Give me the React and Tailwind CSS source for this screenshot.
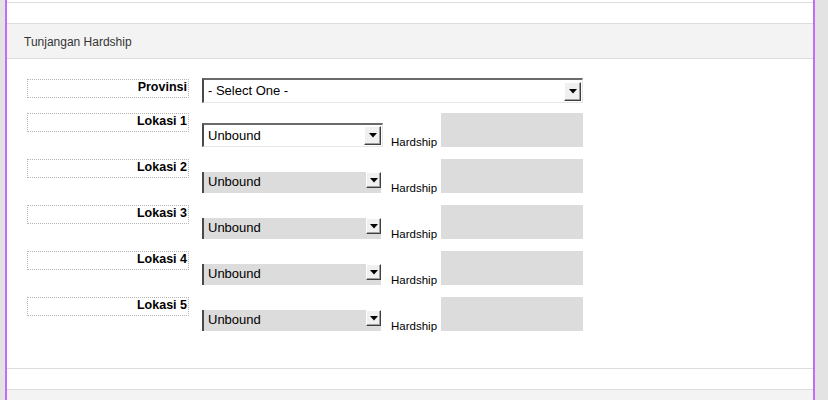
import React from "react";

const font = { fontFamily: '"Liberation Sans", Arial, sans-serif' };

function Arrow({ small }) {
  return (
    <div
      className={`flex items-center justify-center bg-[#f0f0f0] border-t border-l border-t-white border-l-white border-r border-b border-r-[#404040] border-b-[#404040] shadow-[inset_-1px_-1px_0_#a0a0a0] ${
        small ? "w-[15px] h-[16px]" : "w-[17px] h-[19px]"
      }`}
    >
      <svg width="8" height="5" viewBox="0 0 8 5">
        <polygon points="0,0 8,0 4,4.5" fill="#000" />
      </svg>
    </div>
  );
}

function Select({ text, disabled }) {
  if (disabled) {
    return (
      <div className="flex items-start h-[21px] w-[179px] bg-[#dcdcdc] border-l-2 border-[#4a4a4a]">
        <span className="flex-1 pl-[4px] text-[13px] leading-[20px] text-black">{text}</span>
        <Arrow small />
      </div>
    );
  }
  return (
    <div className="flex items-center h-[24px] w-[181px] bg-white border-t-2 border-l-2 border-t-[#6a6a6a] border-l-[#4a4a4a] border-b border-r border-b-[#e6e6e6] border-r-[#e6e6e6] pr-[1px]">
      <span className="flex-1 pl-[4px] text-[13px] text-black">{text}</span>
      <Arrow />
    </div>
  );
}

function Label({ text }) {
  return (
    <div className="w-[162px] h-[19px] border border-dotted border-[#b5b5b5] text-right text-[12.5px] font-bold leading-[15px] text-black pr-[1px]">
      {text}
    </div>
  );
}

function LokasiRow({ n, disabled }) {
  return (
    <div className="flex items-end h-[34px] mb-[12px]">
      <div className="self-start">
        <Label text={`Lokasi ${n}`} />
      </div>
      <div className="ml-[13px] w-[181px]">
        <Select text="Unbound" disabled={disabled} />
      </div>
      <span className="ml-[8px] mr-[4px] -mb-[2px] text-[11.5px] leading-[14px] text-black">Hardship</span>
      <div className="w-[142px] h-[34px] bg-[#dcdcdc]" />
    </div>
  );
}

export default function App() {
  return (
    <div className="flex h-[400px] w-[828px] overflow-hidden bg-[#e3e3e3]" style={font}>
      <div className="w-[5px]" />
      <div className="w-[2px] bg-[#c06cff]" />
      <div className="w-[806px] flex flex-col bg-white">
        <div className="h-[3px] border-b border-[#dddddd]" />
        <div className="h-[20px]" />
        <div className="h-[36px] flex items-center pl-[17px] pt-[1px] bg-[#f3f3f3] border-y border-[#dddddd] text-[12px] text-[#333]">
          Tunjangan Hardship
        </div>
        <div className="h-[310px] border-b border-[#dddddd] pt-[19px] pl-[20px]">
          <div className="flex items-start mb-[10px]">
            <div className="mt-[1px]">
              <Label text="Provinsi" />
            </div>
            <div className="ml-[13px]">
              <div className="flex items-center h-[25px] w-[381px] bg-white border-t-2 border-l-2 border-t-[#6a6a6a] border-l-[#4a4a4a] border-b border-r border-b-[#e6e6e6] border-r-[#e6e6e6] pr-[1px]">
                <span className="flex-1 pl-[4px] text-[13px] text-black">- Select One -</span>
                <Arrow />
              </div>
            </div>
          </div>
          <LokasiRow n={1} />
          <LokasiRow n={2} disabled />
          <LokasiRow n={3} disabled />
          <LokasiRow n={4} disabled />
          <LokasiRow n={5} disabled />
        </div>
        <div className="h-[20px]" />
        <div className="flex-1 bg-[#f3f3f3] border-t border-[#dddddd]" />
      </div>
      <div className="w-[2px] bg-[#c06cff]" />
    </div>
  );
}
